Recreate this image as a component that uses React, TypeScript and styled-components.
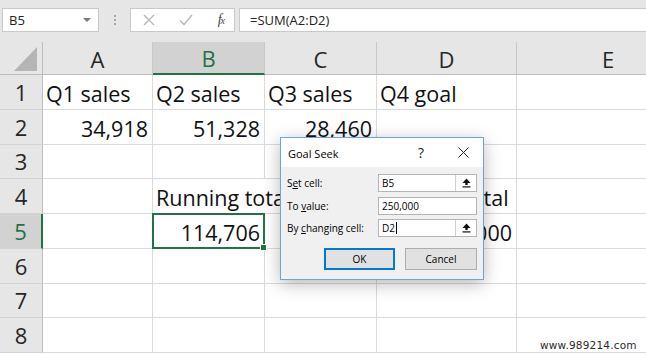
import React from "react";
import styled, { createGlobalStyle, css } from "styled-components";

const Global = createGlobalStyle`
  html, body { margin: 0; padding: 0; background: #ffffff; }
  body { overflow: hidden; }
`;

const GREEN = "#217346";
const UI_FONT = `"Open Sans", "Noto Sans", "Liberation Sans", sans-serif`;

const Window = styled.div`
  position: relative;
  width: 646px;
  height: 354px;
  overflow: hidden;
  background: #ffffff;
  font-family: ${UI_FONT};
`;

/* ---------- formula bar ---------- */
const TopBar = styled.div`
  height: 42px;
  background: #e6e6e6;
  display: flex;
  align-items: flex-start;
  padding: 8px 0 0 2px;
  box-sizing: border-box;
`;

const Box = styled.div`
  height: 24px;
  box-sizing: border-box;
  background: #ffffff;
  border: 1px solid #c9c9c9;
  display: flex;
  align-items: center;
`;

const NameBox = styled(Box)`
  width: 97px;
  padding: 0 6px 0 6px;
  justify-content: space-between;
  font-size: 13px;
  color: #222;
`;

const Caret = styled.span`
  width: 0;
  height: 0;
  border-left: 4px solid transparent;
  border-right: 4px solid transparent;
  border-top: 4px solid #7a7a7a;
  margin-right: 1px;
`;

const Dots = styled.div`
  width: 31px;
  height: 24px;
  display: flex;
  flex-direction: column;
  align-items: center;
  justify-content: center;
  gap: 2px;
  & > span {
    width: 2px;
    height: 2px;
    background: #a8a8a8;
  }
`;

const FxBox = styled(Box)`
  width: 105px;
  padding: 0 10px 0 12px;
  justify-content: space-between;
`;

const FxLabel = styled.span`
  font-family: "Liberation Serif", "DejaVu Serif", serif;
  font-style: italic;
  font-size: 14px;
  color: #444;
  letter-spacing: -1px;
  & > sub {
    font-size: 10px;
    vertical-align: baseline;
  }
`;

const FormulaInput = styled(Box)`
  flex: 1;
  margin-left: 4px;
  padding-left: 10px;
  border-right: none;
  font-size: 13px;
  color: #222;
`;

/* ---------- grid ---------- */
const Sheet = styled.div`
  display: grid;
  grid-template-columns: 43px 110px 112px 112px 140px 183px;
  grid-template-rows: 33px repeat(8, 34.75px);
  font-family: "Open Sans", "Noto Sans", sans-serif;
`;

const Corner = styled.div`
  position: relative;
  background: #e6e6e6;
  border-right: 1px solid #bdbdbd;
  border-bottom: 1px solid #bdbdbd;
  &::after {
    content: "";
    position: absolute;
    right: 5px;
    bottom: 3px;
    width: 23px;
    height: 24px;
    background: #b5b5b5;
    clip-path: polygon(100% 0, 100% 100%, 0 100%);
  }
`;

const ColHead = styled.div<{ $sel?: boolean }>`
  background: #e6e6e6;
  border-right: 1px solid #c8c8c8;
  border-bottom: 1px solid #bdbdbd;
  display: flex;
  align-items: center;
  justify-content: center;
  font-size: 22px;
  color: #262626;
  padding-top: 1px;
  ${(p) =>
    p.$sel &&
    css`
      background: #d2d2d2;
      color: ${GREEN};
      border-bottom: 2px solid ${GREEN};
    `}
`;

const RowHead = styled.div<{ $sel?: boolean }>`
  background: #e6e6e6;
  border-right: 1px solid #bdbdbd;
  border-bottom: 1px solid #d2d2d2;
  display: flex;
  align-items: center;
  justify-content: center;
  font-size: 22px;
  color: #262626;
  ${(p) =>
    p.$sel &&
    css`
      background: #d2d2d2;
      color: ${GREEN};
      border-right: 2px solid ${GREEN};
    `}
`;

const Cell = styled.div<{ $num?: boolean; $spill?: boolean; $sel?: boolean }>`
  position: relative;
  border-right: 1px solid #dadada;
  border-bottom: 1px solid #dadada;
  display: flex;
  align-items: flex-end;
  justify-content: ${(p) => (p.$num ? "flex-end" : "flex-start")};
  padding: 0 ${(p) => (p.$num ? "4px" : "0")} 1px ${(p) => (p.$num ? "0" : "3px")};
  font-size: 21.5px;
  color: #111;
  white-space: nowrap;
  min-width: 0;
  ${(p) =>
    p.$spill &&
    css`
      z-index: 1;
      overflow: visible;
      border-right-color: transparent;
    `}
  ${(p) =>
    p.$sel &&
    css`
      z-index: 2;
      &::after {
        content: "";
        position: absolute;
        left: -1px;
        top: -1px;
        right: -1px;
        bottom: -1px;
        border: 2px solid ${GREEN};
      }
      &::before {
        content: "";
        position: absolute;
        right: -3px;
        bottom: -3px;
        width: 5px;
        height: 5px;
        background: ${GREEN};
        border: 1px solid #fff;
        z-index: 3;
      }
    `}
`;

/* ---------- dialog ---------- */
const Dialog = styled.div`
  position: absolute;
  left: 280px;
  top: 137px;
  width: 204px;
  height: 143px;
  box-sizing: border-box;
  border: 1px solid #6fa3d8;
  background: #f0f0f0;
  box-shadow: 0 4px 16px rgba(0, 0, 0, 0.28);
  font-family: ${UI_FONT};
  font-size: 10px;
  color: #000;
  z-index: 10;
  display: flex;
  flex-direction: column;
`;

const TitleBar = styled.div`
  height: 29px;
  background: #ffffff;
  display: flex;
  align-items: center;
  padding-left: 7px;
`;

const Title = styled.span`
  font-size: 11px;
  flex: 1;
  padding-top: 1px;
`;

const TitleButton = styled.div<{ $w: number }>`
  width: ${(p) => p.$w}px;
  height: 29px;
  display: flex;
  align-items: center;
  justify-content: center;
  font-size: 14px;
  color: #222;
`;

const Body = styled.div`
  flex: 1;
  padding: 7px 6px 0 6px;
  display: flex;
  flex-direction: column;
`;

const FieldRow = styled.div<{ $gap: number }>`
  display: flex;
  align-items: center;
  justify-content: space-between;
  height: 18px;
  margin-top: ${(p) => p.$gap}px;
`;

const Label = styled.span`
  font-size: 10px;
  & > u {
    text-decoration-thickness: 1px;
    text-underline-offset: 1px;
  }
`;

const Input = styled.div`
  width: 99px;
  height: 18px;
  box-sizing: border-box;
  border: 1px solid #b4b4b4;
  background: #fff;
  display: flex;
  align-items: center;
  font-size: 10px;
`;

const InputText = styled.span`
  flex: 1;
  padding-left: 3px;
  display: flex;
  align-items: center;
`;

const Caret2 = styled.span`
  display: inline-block;
  width: 1px;
  height: 12px;
  background: #000;
  margin-left: 1px;
`;

const RefButton = styled.div`
  width: 20px;
  height: 16px;
  border-left: 1px solid #d0d0d0;
  display: flex;
  align-items: center;
  justify-content: center;
`;

const Buttons = styled.div`
  display: flex;
  justify-content: flex-end;
  gap: 10px;
  margin-top: 11px;
  padding-right: 0;
`;

const Button = styled.div<{ $primary?: boolean; $w: number }>`
  width: ${(p) => p.$w}px;
  height: 22px;
  box-sizing: border-box;
  background: #e1e1e1;
  border: ${(p) => (p.$primary ? "2px solid #0078d7" : "1px solid #adadad")};
  display: flex;
  align-items: center;
  justify-content: center;
  font-size: 10px;
  color: #000;
`;

const Watermark = styled.div`
  position: absolute;
  left: 540px;
  top: 339px;
  font-family: "DejaVu Sans", sans-serif;
  font-size: 10.5px;
  color: #2a2a2a;
  text-shadow: 0 0 2px #fff;
  letter-spacing: 0.2px;
  z-index: 20;
`;

const RefIcon = () => (
  <svg width="9" height="10" viewBox="0 0 9 10">
    <polygon points="4.5,0.5 8.5,5 0.5,5" fill="#111" />
    <rect x="3.3" y="4.5" width="2.4" height="2.5" fill="#111" />
    <rect x="0.5" y="8.3" width="8" height="1.2" fill="#111" />
  </svg>
);

const CloseIcon = () => (
  <svg width="11" height="11" viewBox="0 0 11 11">
    <path d="M0.5 0.5 L10.5 10.5 M10.5 0.5 L0.5 10.5" stroke="#222" strokeWidth="1" />
  </svg>
);

const XMark = () => (
  <svg width="12" height="12" viewBox="0 0 12 12">
    <path d="M1 1 L11 11 M11 1 L1 11" stroke="#b9b9b9" strokeWidth="1.4" />
  </svg>
);

const Check = () => (
  <svg width="14" height="12" viewBox="0 0 14 12">
    <path d="M1 6.5 L5 10.5 L13 1" stroke="#b9b9b9" strokeWidth="1.4" fill="none" />
  </svg>
);

type CellDef = { text?: string; num?: boolean; spill?: boolean; sel?: boolean };

const rows: CellDef[][] = [
  [{ text: "Q1 sales" }, { text: "Q2 sales" }, { text: "Q3 sales" }, { text: "Q4 goal" }, {}],
  [{ text: "34,918", num: true }, { text: "51,328", num: true }, { text: "28,460", num: true }, {}, {}],
  [{}, {}, {}, {}, {}],
  [{}, { text: "Running total", spill: true }, {}, { text: "Desired total" }, {}],
  [{}, { text: "114,706", num: true, sel: true }, {}, { text: "250,000", num: true }, {}],
  [{}, {}, {}, {}, {}],
  [{}, {}, {}, {}, {}],
  [{}, {}, {}, {}, {}],
];

const cols = ["A", "B", "C", "D", "E"];

export default function App() {
  return (
    <Window>
      <Global />
      <TopBar>
        <NameBox>
          <span>B5</span>
          <Caret />
        </NameBox>
        <Dots>
          <span />
          <span />
          <span />
        </Dots>
        <FxBox>
          <XMark />
          <Check />
          <FxLabel>
            f<sub>x</sub>
          </FxLabel>
        </FxBox>
        <FormulaInput>=SUM(A2:D2)</FormulaInput>
      </TopBar>
      <Sheet>
        <Corner />
        {cols.map((c) => (
          <ColHead key={c} $sel={c === "B"}>
            {c}
          </ColHead>
        ))}
        {rows.map((r, i) => (
          <React.Fragment key={i}>
            <RowHead $sel={i === 4}>{i + 1}</RowHead>
            {r.map((cell, j) => (
              <Cell key={j} $num={cell.num} $spill={cell.spill} $sel={cell.sel}>
                {cell.text}
              </Cell>
            ))}
          </React.Fragment>
        ))}
      </Sheet>

      <Dialog>
        <TitleBar>
          <Title>Goal Seek</Title>
          <TitleButton $w={44}>?</TitleButton>
          <TitleButton $w={40}>
            <CloseIcon />
          </TitleButton>
        </TitleBar>
        <Body>
          <FieldRow $gap={0}>
            <Label>
              S<u>e</u>t cell:
            </Label>
            <Input>
              <InputText>B5</InputText>
              <RefButton>
                <RefIcon />
              </RefButton>
            </Input>
          </FieldRow>
          <FieldRow $gap={5}>
            <Label>
              To <u>v</u>alue:
            </Label>
            <Input>
              <InputText>250,000</InputText>
            </Input>
          </FieldRow>
          <FieldRow $gap={4}>
            <Label>
              By <u>c</u>hanging cell:
            </Label>
            <Input>
              <InputText>
                D2
                <Caret2 />
              </InputText>
              <RefButton>
                <RefIcon />
              </RefButton>
            </Input>
          </FieldRow>
          <Buttons>
            <Button $primary $w={71}>
              OK
            </Button>
            <Button $w={72}>Cancel</Button>
          </Buttons>
        </Body>
      </Dialog>
      <Watermark>www.989214.com</Watermark>
    </Window>
  );
}
